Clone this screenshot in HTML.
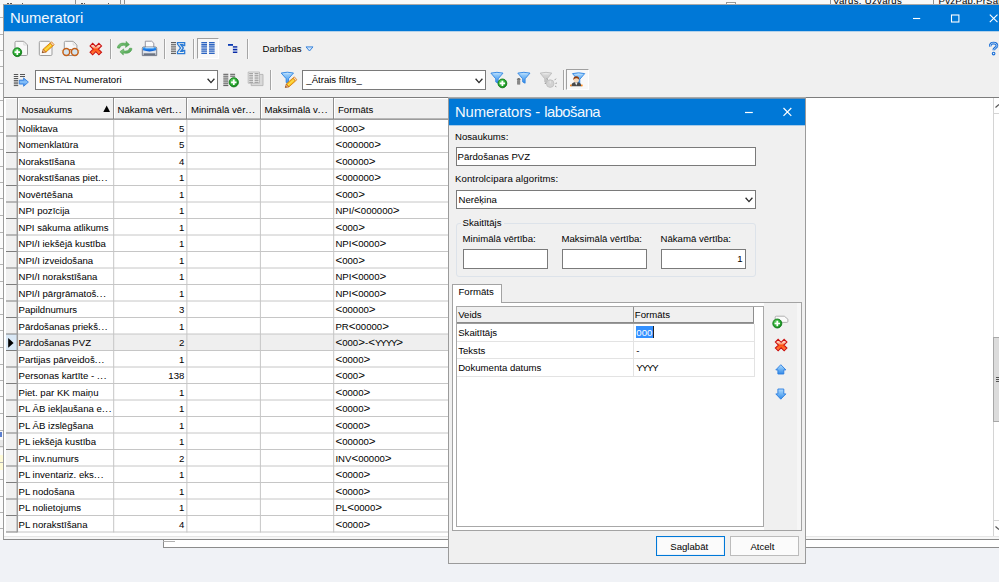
<!DOCTYPE html>
<html><head><meta charset="utf-8"><title>Numeratori</title>
<style>
html,body{margin:0;padding:0}
body{width:999px;height:582px;overflow:hidden;position:relative;background:#f0f2f6;
 font-family:"Liberation Sans",sans-serif;font-size:9.6px;color:#000;line-height:12px}
div,span,svg{position:absolute;box-sizing:border-box}
.t{white-space:nowrap;line-height:12px;height:12px}
.r{text-align:right}
.w{color:#fff}
.b{position:static;font-size:11.6px;line-height:0}
.ti{font-size:14.8px;line-height:18px;height:18px;color:#f4f9fd;white-space:nowrap}
.vl{width:1px;background:#c9c9c9}
.hl{height:1px;background:#c9c9c9}
.sep{width:1px;background:#a5a5a5;box-shadow:1px 0 0 #fbfbfb}
.inp{background:#fff;border:1px solid #7a7a7a}
</style></head>
<body>
<div style="left:0px;top:0px;width:999px;height:5px;background:#f5f5f5"></div>
<div style="left:125px;top:0px;width:874px;height:5px;background:#f9f9f9"></div>
<div style="left:75px;top:0px;width:1px;height:5px;background:#8f8f8f"></div>
<div style="left:120px;top:0px;width:1px;height:5px;background:#8f8f8f"></div>
<div style="left:124px;top:0px;width:1px;height:5px;background:#8f8f8f"></div>
<div style="left:830px;top:0px;width:1px;height:5px;background:#8f8f8f"></div>
<div style="left:933px;top:0px;width:1px;height:5px;background:#8f8f8f"></div>
<div style="left:726px;top:2px;width:10px;height:3px;background:#fff;border:1px solid #9a9a9a;border-bottom:none"></div>
<div style="left:0;top:0;width:999px;height:4.6px;overflow:hidden">
<div class="t " style="left:833px;top:-5px;letter-spacing:.3px">Vards, Uzvards</div>
<div class="t " style="left:938.5px;top:-5px;letter-spacing:.25px">PvzPap.PrSan</div>
</div>
<div style="left:7px;top:3px;width:2px;height:1.5px;background:#555"></div>
<div style="left:10px;top:3px;width:2px;height:1.5px;background:#555"></div>
<div style="left:22px;top:3px;width:1px;height:1.5px;background:#555"></div>
<div style="left:81px;top:3px;width:2px;height:1.5px;background:#555"></div>
<div style="left:84px;top:3px;width:1px;height:1.5px;background:#555"></div>
<div style="left:108px;top:3px;width:1px;height:1.5px;background:#555"></div>
<div style="left:0px;top:5px;width:3px;height:535px;background:#fbfbfb"></div>
<div style="left:0px;top:440px;width:3px;height:8px;background:#e8e8e8"></div>
<div style="left:0px;top:455px;width:3px;height:15px;background:#fffbd6"></div>
<div style="left:0px;top:432px;width:2px;height:5px;background:#5b7fd0"></div>
<div style="left:0px;top:17px;width:3px;height:1px;background:#b4b4b4"></div>
<div style="left:0px;top:34px;width:3px;height:1px;background:#b4b4b4"></div>
<div style="left:0px;top:50px;width:3px;height:1px;background:#b4b4b4"></div>
<div style="left:0px;top:66px;width:3px;height:1px;background:#b4b4b4"></div>
<div style="left:0px;top:83px;width:3px;height:1px;background:#b4b4b4"></div>
<div style="left:0px;top:100px;width:3px;height:1px;background:#b4b4b4"></div>
<div style="left:0px;top:116px;width:3px;height:1px;background:#b4b4b4"></div>
<div style="left:0px;top:132px;width:3px;height:1px;background:#b4b4b4"></div>
<div style="left:0px;top:149px;width:3px;height:1px;background:#b4b4b4"></div>
<div style="left:0px;top:166px;width:3px;height:1px;background:#b4b4b4"></div>
<div style="left:0px;top:182px;width:3px;height:1px;background:#b4b4b4"></div>
<div style="left:0px;top:198px;width:3px;height:1px;background:#b4b4b4"></div>
<div style="left:0px;top:215px;width:3px;height:1px;background:#b4b4b4"></div>
<div style="left:0px;top:232px;width:3px;height:1px;background:#b4b4b4"></div>
<div style="left:0px;top:248px;width:3px;height:1px;background:#b4b4b4"></div>
<div style="left:0px;top:264px;width:3px;height:1px;background:#b4b4b4"></div>
<div style="left:0px;top:281px;width:3px;height:1px;background:#b4b4b4"></div>
<div style="left:0px;top:298px;width:3px;height:1px;background:#b4b4b4"></div>
<div style="left:0px;top:314px;width:3px;height:1px;background:#b4b4b4"></div>
<div style="left:0px;top:330px;width:3px;height:1px;background:#b4b4b4"></div>
<div style="left:0px;top:347px;width:3px;height:1px;background:#b4b4b4"></div>
<div style="left:0px;top:364px;width:3px;height:1px;background:#b4b4b4"></div>
<div style="left:0px;top:380px;width:3px;height:1px;background:#b4b4b4"></div>
<div style="left:0px;top:396px;width:3px;height:1px;background:#b4b4b4"></div>
<div style="left:0px;top:413px;width:3px;height:1px;background:#b4b4b4"></div>
<div style="left:0px;top:430px;width:3px;height:1px;background:#b4b4b4"></div>
<div style="left:0px;top:446px;width:3px;height:1px;background:#b4b4b4"></div>
<div style="left:0px;top:462px;width:3px;height:1px;background:#b4b4b4"></div>
<div style="left:0px;top:479px;width:3px;height:1px;background:#b4b4b4"></div>
<div style="left:0px;top:496px;width:3px;height:1px;background:#b4b4b4"></div>
<div style="left:0px;top:512px;width:3px;height:1px;background:#b4b4b4"></div>
<div style="left:0px;top:528px;width:3px;height:1px;background:#b4b4b4"></div>
<div style="left:163px;top:540px;width:836px;height:8px;background:#fff;border-left:1px solid #8c8c8c;border-bottom:1px solid #8c8c8c"></div>
<div style="left:163px;top:541px;width:12px;height:1px;background:#b0b0b0"></div>
<div style="left:3px;top:4px;width:996px;height:536px;background:#f0f0f0;border-left:1px solid #9c9c9c;border-bottom:1px solid #8a8a8a;border-top:1px solid #a8a8a8"></div>
<div style="left:4px;top:5px;width:995px;height:26px;background:#0078d7"></div>
<div style="left:4px;top:31px;width:995px;height:1px;background:#b4d2ea"></div>
<div class="ti" style="left:10px;top:8.5px">Numeratori</div>
<svg style="left:905px;top:8px" width="94" height="20" viewBox="0 0 94 20"><g stroke="#fff" stroke-width="1.1" fill="none"><path d="M8 10.5H15.2"/><rect x="46.5" y="7" width="7.4" height="7"/><path d="M84.8 6.7L92.5 14.2M92.5 6.7L84.8 14.2"/></g></svg>
<div style="left:4px;top:97px;width:995px;height:439px;background:#fff;border-top:1px solid #7d7d7d"></div>
<div style="left:4px;top:536px;width:995px;height:1px;background:#e6e6e6"></div>
<div style="left:4px;top:537px;width:995px;height:2px;background:#f7f7f7"></div>
<div style="left:6px;top:98px;width:651px;height:21.5px;background:#f0f0f0;border-top:1px solid #fff"></div>
<div style="left:16.5px;top:98px;width:1.5px;height:21.5px;background:#8e8e8e"></div>
<div style="left:18px;top:99px;width:1px;height:20px;background:#fff"></div>
<div style="left:112.5px;top:98px;width:1.5px;height:21.5px;background:#8e8e8e"></div>
<div style="left:114px;top:99px;width:1px;height:20px;background:#fff"></div>
<div style="left:185.5px;top:98px;width:1.5px;height:21.5px;background:#8e8e8e"></div>
<div style="left:187px;top:99px;width:1px;height:20px;background:#fff"></div>
<div style="left:259.5px;top:98px;width:1.5px;height:21.5px;background:#8e8e8e"></div>
<div style="left:261px;top:99px;width:1px;height:20px;background:#fff"></div>
<div style="left:332.5px;top:98px;width:1.5px;height:21.5px;background:#8e8e8e"></div>
<div style="left:334px;top:99px;width:1px;height:20px;background:#fff"></div>
<div class="t " style="left:21.4px;top:104px;">Nosaukums</div>
<div class="t " style="left:117.5px;top:104px;">Nākamā vērt<span style="position:static;letter-spacing:.75px">...</span></div>
<div class="t " style="left:191px;top:104px;">Minimālā vēr<span style="position:static;letter-spacing:.75px">...</span></div>
<div class="t " style="left:264.5px;top:104px;">Maksimālā v<span style="position:static;letter-spacing:.75px">...</span></div>
<div class="t " style="left:338px;top:104px;">Formāts</div>
<svg style="left:103px;top:105px" width="8" height="8" viewBox="0 0 8 8"><path d="M0.3 7L3.7 0.6L7 7Z" fill="#000"/></svg>
<div style="left:6px;top:119px;width:11px;height:413px;background:#f0f0f0"></div>
<svg style="left:0;top:0" width="700" height="540" viewBox="0 0 700 540">
<rect x="17.5" y="334" width="640" height="16.5" fill="#efefef"/>
<rect x="6" y="334" width="11" height="16.5" fill="#d9e8f6"/>
<path d="M8.2 338.1L13.6 342.9L8.2 347.7Z" fill="#000"/>
<path d="M17.5 136H657M17.5 152.5H657M17.5 169H657M17.5 185.5H657M17.5 202H657M17.5 218.5H657M17.5 235H657M17.5 251.5H657M17.5 268H657M17.5 284.5H657M17.5 301H657M17.5 317.5H657M17.5 334H657M17.5 350.5H657M17.5 367H657M17.5 383.5H657M17.5 400H657M17.5 416.5H657M17.5 433H657M17.5 449.5H657M17.5 466H657M17.5 482.5H657M17.5 499H657M17.5 515.5H657M17.5 532H657" stroke="#c6c6c6" stroke-width="1" fill="none"/>
<path d="M6 119.15H657" stroke="#808080" stroke-width="1.2" fill="none"/>
<path d="M6 136H17M6 152.5H17M6 169H17M6 185.5H17M6 202H17M6 218.5H17M6 235H17M6 251.5H17M6 268H17M6 284.5H17M6 301H17M6 317.5H17M6 334H17M6 350.5H17M6 367H17M6 383.5H17M6 400H17M6 416.5H17M6 433H17M6 449.5H17M6 466H17M6 482.5H17M6 499H17M6 515.5H17M6 532H17" stroke="#7e7e7e" stroke-width="1" fill="none"/>
<path d="M113.7 119.5V532.5M186.9 119.5V532.5M260.4 119.5V532.5M333.7 119.5V532.5" stroke="#c6c6c6" stroke-width="1" fill="none"/>
<path d="M17.3 119V532.5" stroke="#9a9a9a" stroke-width="1.5" fill="none"/>
</svg>
<div class="t " style="left:18.5px;top:123px;">Noliktava</div>
<div class="t r " style="left:-15.7px;width:200px;top:123px;">5</div>
<div class="t " style="left:335.4px;top:123px;"><span class="b">&lt;</span>000<span class="b">&gt;</span></div>
<div class="t " style="left:18.5px;top:139px;">Nomenklatūra</div>
<div class="t r " style="left:-15.7px;width:200px;top:139px;">5</div>
<div class="t " style="left:335.4px;top:139px;"><span class="b">&lt;</span>000000<span class="b">&gt;</span></div>
<div class="t " style="left:18.5px;top:156px;">Norakstīšana</div>
<div class="t r " style="left:-15.7px;width:200px;top:156px;">4</div>
<div class="t " style="left:335.4px;top:156px;"><span class="b">&lt;</span>00000<span class="b">&gt;</span></div>
<div class="t " style="left:18.5px;top:172px;">Norakstīšanas piet<span style="position:static;letter-spacing:.75px">...</span></div>
<div class="t r " style="left:-15.7px;width:200px;top:172px;">1</div>
<div class="t " style="left:335.4px;top:172px;"><span class="b">&lt;</span>000000<span class="b">&gt;</span></div>
<div class="t " style="left:18.5px;top:189px;">Novērtēšana</div>
<div class="t r " style="left:-15.7px;width:200px;top:189px;">1</div>
<div class="t " style="left:335.4px;top:189px;"><span class="b">&lt;</span>000<span class="b">&gt;</span></div>
<div class="t " style="left:18.5px;top:205px;">NPI pozīcija</div>
<div class="t r " style="left:-15.7px;width:200px;top:205px;">1</div>
<div class="t " style="left:335.4px;top:205px;">NPI/<span class="b">&lt;</span>000000<span class="b">&gt;</span></div>
<div class="t " style="left:18.5px;top:222px;">NPI sākuma atlikums</div>
<div class="t r " style="left:-15.7px;width:200px;top:222px;">1</div>
<div class="t " style="left:335.4px;top:222px;"><span class="b">&lt;</span>000<span class="b">&gt;</span></div>
<div class="t " style="left:18.5px;top:238px;">NPI/I iekšējā kustība</div>
<div class="t r " style="left:-15.7px;width:200px;top:238px;">1</div>
<div class="t " style="left:335.4px;top:238px;">NPI<span class="b">&lt;</span>0000<span class="b">&gt;</span></div>
<div class="t " style="left:18.5px;top:255px;">NPI/I izveidošana</div>
<div class="t r " style="left:-15.7px;width:200px;top:255px;">1</div>
<div class="t " style="left:335.4px;top:255px;"><span class="b">&lt;</span>000<span class="b">&gt;</span></div>
<div class="t " style="left:18.5px;top:271px;">NPI/I norakstīšana</div>
<div class="t r " style="left:-15.7px;width:200px;top:271px;">1</div>
<div class="t " style="left:335.4px;top:271px;">NPI<span class="b">&lt;</span>0000<span class="b">&gt;</span></div>
<div class="t " style="left:18.5px;top:288px;">NPI/I pārgrāmatoš<span style="position:static;letter-spacing:.75px">...</span></div>
<div class="t r " style="left:-15.7px;width:200px;top:288px;">1</div>
<div class="t " style="left:335.4px;top:288px;">NPI<span class="b">&lt;</span>0000<span class="b">&gt;</span></div>
<div class="t " style="left:18.5px;top:304px;">Papildnumurs</div>
<div class="t r " style="left:-15.7px;width:200px;top:304px;">3</div>
<div class="t " style="left:335.4px;top:304px;"><span class="b">&lt;</span>00000<span class="b">&gt;</span></div>
<div class="t " style="left:18.5px;top:321px;">Pārdošanas priekš<span style="position:static;letter-spacing:.75px">...</span></div>
<div class="t r " style="left:-15.7px;width:200px;top:321px;">1</div>
<div class="t " style="left:335.4px;top:321px;">PR<span class="b">&lt;</span>00000<span class="b">&gt;</span></div>
<div class="t " style="left:18.5px;top:337px;">Pārdošanas PVZ</div>
<div class="t r " style="left:-15.7px;width:200px;top:337px;">2</div>
<div class="t " style="left:335.4px;top:337px;"><span class="b">&lt;</span>000<span class="b">&gt;</span>-<span class="b">&lt;</span><span style="position:static;letter-spacing:-1.05px">YYYY</span><span class="b">&gt;</span></div>
<div class="t " style="left:18.5px;top:354px;">Partijas pārveidoš<span style="position:static;letter-spacing:.75px">...</span></div>
<div class="t r " style="left:-15.7px;width:200px;top:354px;">1</div>
<div class="t " style="left:335.4px;top:354px;"><span class="b">&lt;</span>0000<span class="b">&gt;</span></div>
<div class="t " style="left:18.5px;top:370px;">Personas kartīte - <span style="position:static;letter-spacing:.75px">...</span></div>
<div class="t r " style="left:-15.7px;width:200px;top:370px;">138</div>
<div class="t " style="left:335.4px;top:370px;"><span class="b">&lt;</span>000<span class="b">&gt;</span></div>
<div class="t " style="left:18.5px;top:387px;">Piet. par KK maiņu</div>
<div class="t r " style="left:-15.7px;width:200px;top:387px;">1</div>
<div class="t " style="left:335.4px;top:387px;"><span class="b">&lt;</span>0000<span class="b">&gt;</span></div>
<div class="t " style="left:18.5px;top:403px;">PL ĀB iekļaušana e<span style="position:static;letter-spacing:.75px">...</span></div>
<div class="t r " style="left:-15.7px;width:200px;top:403px;">1</div>
<div class="t " style="left:335.4px;top:403px;"><span class="b">&lt;</span>0000<span class="b">&gt;</span></div>
<div class="t " style="left:18.5px;top:420px;">PL ĀB izslēgšana</div>
<div class="t r " style="left:-15.7px;width:200px;top:420px;">1</div>
<div class="t " style="left:335.4px;top:420px;"><span class="b">&lt;</span>0000<span class="b">&gt;</span></div>
<div class="t " style="left:18.5px;top:436px;">PL iekšējā kustība</div>
<div class="t r " style="left:-15.7px;width:200px;top:436px;">1</div>
<div class="t " style="left:335.4px;top:436px;"><span class="b">&lt;</span>00000<span class="b">&gt;</span></div>
<div class="t " style="left:18.5px;top:453px;">PL inv.numurs</div>
<div class="t r " style="left:-15.7px;width:200px;top:453px;">2</div>
<div class="t " style="left:335.4px;top:453px;">INV<span class="b">&lt;</span>00000<span class="b">&gt;</span></div>
<div class="t " style="left:18.5px;top:469px;">PL inventariz. eks<span style="position:static;letter-spacing:.75px">...</span></div>
<div class="t r " style="left:-15.7px;width:200px;top:469px;">1</div>
<div class="t " style="left:335.4px;top:469px;"><span class="b">&lt;</span>0000<span class="b">&gt;</span></div>
<div class="t " style="left:18.5px;top:486px;">PL nodošana</div>
<div class="t r " style="left:-15.7px;width:200px;top:486px;">1</div>
<div class="t " style="left:335.4px;top:486px;"><span class="b">&lt;</span>0000<span class="b">&gt;</span></div>
<div class="t " style="left:18.5px;top:502px;">PL nolietojums</div>
<div class="t r " style="left:-15.7px;width:200px;top:502px;">1</div>
<div class="t " style="left:335.4px;top:502px;">PL<span class="b">&lt;</span>0000<span class="b">&gt;</span></div>
<div class="t " style="left:18.5px;top:519px;">PL norakstīšana</div>
<div class="t r " style="left:-15.7px;width:200px;top:519px;">4</div>
<div class="t " style="left:335.4px;top:519px;"><span class="b">&lt;</span>0000<span class="b">&gt;</span></div>
<div style="left:993px;top:98px;width:6px;height:438px;background:#fff;border-left:1px solid #d4d4d4"></div>
<div style="left:993px;top:113px;width:6px;height:1px;background:#d4d4d4"></div>
<div style="left:993px;top:520px;width:6px;height:1px;background:#d4d4d4"></div>
<div style="left:993px;top:337px;width:6px;height:85px;background:#dcdcdc;border-left:1px solid #a8a8a8;border-top:1px solid #a8a8a8;border-bottom:1px solid #a8a8a8"></div>
<div style="left:996px;top:377px;width:3px;height:1px;background:#555"></div>
<div style="left:996px;top:379px;width:3px;height:1px;background:#555"></div>
<div style="left:996px;top:381px;width:3px;height:1px;background:#555"></div>
<svg style="left:995px;top:103px" width="4" height="6" viewBox="0 0 4 6"><path d="M0.5 4.5L4 1.5" stroke="#555" stroke-width="1.2" fill="none"/></svg>
<svg style="left:995px;top:525px" width="4" height="6" viewBox="0 0 4 6"><path d="M0.5 1.5L4 4.5" stroke="#555" stroke-width="1.2" fill="none"/></svg>
<!--TOOLBAR-->
<div class="sep" style="left:110px;top:38.5px;width:1px;height:20px;"></div>
<div class="sep" style="left:164px;top:38.5px;width:1px;height:20px;"></div>
<div class="sep" style="left:193px;top:38.5px;width:1px;height:20px;"></div>
<div class="sep" style="left:247px;top:38.5px;width:1px;height:20px;"></div>
<div style="left:197px;top:38px;width:22px;height:20.5px;background:#f8f8f8;border-top:1px solid #a0a0a0;border-left:1px solid #a0a0a0;border-right:1px solid #fff;border-bottom:1px solid #fff"></div>
<div class="t " style="left:262.6px;top:43px;">Darbības</div>
<svg style="left:304.5px;top:45.5px" width="9" height="6" viewBox="0 0 9 6"><path d="M1 0.9H8L4.5 5Z" fill="#cfe4fb" stroke="#3a86dc" stroke-width="1"/></svg>
<div class="inp" style="left:35px;top:70px;width:183px;height:19.5px;"></div>
<div class="t " style="left:38.9px;top:74px;">INSTAL Numeratori</div>
<svg style="left:206.5px;top:78px" width="8" height="6" viewBox="0 0 8 6"><path d="M0.6 0.8L4 4.6L7.4 0.8" stroke="#2b2b2b" stroke-width="1.3" fill="none"/></svg>
<div class="inp" style="left:302px;top:70px;width:184px;height:19.5px;"></div>
<div class="t " style="left:306.3px;top:74px;">_Ātrais filtrs_</div>
<svg style="left:474.5px;top:78px" width="8" height="6" viewBox="0 0 8 6"><path d="M0.6 0.8L4 4.6L7.4 0.8" stroke="#2b2b2b" stroke-width="1.3" fill="none"/></svg>
<div class="sep" style="left:270px;top:70px;width:1px;height:19.5px;"></div>
<div class="sep" style="left:563px;top:70px;width:1px;height:19.5px;"></div>
<div style="left:566px;top:69px;width:22.5px;height:20.5px;background:#f8f8f8;border-top:1px solid #a0a0a0;border-left:1px solid #a0a0a0;border-right:1px solid #fff;border-bottom:1px solid #fff"></div>
<!--ICONS-->
<!--DIALOG-->
<div style="left:448px;top:97px;width:358px;height:466.5px;background:#f0f0f0;border:1px solid #9b9b9b;border-top-color:#a9a9a9"></div>
<div style="left:449px;top:98px;width:356px;height:1px;background:#6f8faa"></div>
<div style="left:449px;top:99px;width:356px;height:26px;background:#0078d7"></div>
<div style="left:449px;top:125px;width:356px;height:1px;background:#a8cbe8"></div>
<div class="ti" style="left:455px;top:103px;letter-spacing:-0.1px">Numerators - <span style="position:static;letter-spacing:-0.52px">labošana</span></div>
<svg style="left:740px;top:104px" width="60" height="16" viewBox="0 0 60 16"><g stroke="#fff" stroke-width="1.2" fill="none"><path d="M5 8.5H12.8"/><path d="M43.5 4L51.3 11.8M51.3 4L43.5 11.8"/></g></svg>
<div class="t " style="left:455px;top:131px;">Nosaukums:</div>
<div class="inp" style="left:455.5px;top:147px;width:300.5px;height:19.4px;"></div>
<div class="t " style="left:457.6px;top:151px;">Pārdošanas PVZ</div>
<div class="t " style="left:455px;top:173px;letter-spacing:.1px">Kontrolcipara algoritms:</div>
<div class="inp" style="left:455.5px;top:190px;width:300.5px;height:18.8px;"></div>
<div class="t " style="left:458.5px;top:194px;">Nerēķina</div>
<svg style="left:744.5px;top:197px" width="8" height="6" viewBox="0 0 8 6"><path d="M0.6 0.8L4 4.6L7.4 0.8" stroke="#2b2b2b" stroke-width="1.3" fill="none"/></svg>
<div style="left:456px;top:222.5px;width:300px;height:54.5px;border:1px solid #dde3ea;border-radius:3px"></div>
<div style="left:461px;top:218px;width:43px;height:10px;background:#f0f0f0"></div>
<div class="t " style="left:462.6px;top:217px;">Skaitītājs</div>
<div class="t " style="left:462.6px;top:233px;">Minimālā vērtība:</div>
<div class="t " style="left:561.5px;top:233px;">Maksimālā vērtība:</div>
<div class="t " style="left:660.5px;top:233px;">Nākamā vērtība:</div>
<div class="inp" style="left:463px;top:249px;width:85.2px;height:20px;"></div>
<div class="inp" style="left:562px;top:249px;width:85.2px;height:20px;"></div>
<div class="inp" style="left:661px;top:249px;width:85.2px;height:20px;"></div>
<div class="t r " style="left:542.5px;width:200px;top:253px;">1</div>
<div style="left:452px;top:302px;width:350px;height:228.5px;background:#fff;border:1px solid #a3a3a3"></div>
<div style="left:452px;top:283.5px;width:50.3px;height:19.5px;background:#fff;border:1px solid #a3a3a3;border-bottom:none"></div>
<div class="t " style="left:458.5px;top:286px;">Formāts</div>
<div style="left:764px;top:303px;width:37px;height:227px;background:#f0f0f0"></div>
<div style="left:797px;top:303px;width:4px;height:227px;background:#f6f6f6"></div>
<div style="left:456px;top:305.5px;width:308px;height:221.5px;background:#fff;border:1px solid #a8a8a8"></div>
<div style="left:457px;top:306.5px;width:297px;height:16.5px;background:#f0f0f0;border-bottom:1px solid #8a8a8a;border-right:1.5px solid #8e8e8e"></div>
<div style="left:457px;top:323px;width:297px;height:1px;background:#9a9a9a"></div>
<div style="left:632.5px;top:307px;width:1.5px;height:16px;background:#8e8e8e"></div>
<div class="t " style="left:458.2px;top:309px;">Veids</div>
<div class="t " style="left:634.8px;top:309px;">Formāts</div>
<div style="left:457px;top:341px;width:297px;height:1px;background:#e3e3e3"></div>
<div class="t " style="left:458.2px;top:327px;">Skaitītājs</div>
<div style="left:636px;top:326px;width:16.8px;height:11.8px;background:#3390ff"></div>
<div style="left:652.5px;top:326px;width:1px;height:11.8px;background:#222"></div>
<div class="t w" style="left:636.3px;top:327px;">000</div>
<div style="left:457px;top:358px;width:297px;height:1px;background:#e3e3e3"></div>
<div class="t " style="left:458.2px;top:345px;">Teksts</div>
<div class="t " style="left:636.3px;top:345px;">-</div>
<div style="left:457px;top:376px;width:297px;height:1px;background:#e3e3e3"></div>
<div class="t " style="left:458.2px;top:362px;">Dokumenta datums</div>
<div class="t " style="left:636.3px;top:362px;"><span style="position:static;letter-spacing:-1.05px">YYYY</span></div>
<div style="left:633px;top:324px;width:1px;height:52px;background:#e3e3e3"></div>
<div style="left:753.5px;top:324px;width:1px;height:53px;background:#e3e3e3"></div>
<div style="left:656px;top:536px;width:69px;height:20px;background:#fbfbfb;border:1px solid #0078d7;box-shadow:inset 0 0 0 1px #e9f2fb"></div>
<div style="left:729.5px;top:536.3px;width:69px;height:19.5px;background:#fbfbfb;border:1px solid #bcbcbc"></div>
<div class="t " style="left:670.3px;top:541px;">Saglabāt</div>
<div class="t " style="left:750.4px;top:541px;">Atcelt</div>
<svg style="left:0;top:0" width="999" height="582" viewBox="0 0 999 582"><defs>
<radialGradient id="gg" cx="0.42" cy="0.4" r="0.62"><stop offset="0" stop-color="#7fe07f"/><stop offset="0.55" stop-color="#35b43c"/><stop offset="1" stop-color="#0d7d14"/></radialGradient>
<linearGradient id="rx" x1="0" y1="0" x2="0" y2="1"><stop offset="0" stop-color="#ffe9e0"/><stop offset="0.3" stop-color="#ffc3a8"/><stop offset="0.52" stop-color="#ff5410"/><stop offset="1" stop-color="#ff8a50"/></linearGradient>
<linearGradient id="fg" x1="0" y1="0" x2="0" y2="1"><stop offset="0" stop-color="#b4dbfc"/><stop offset="0.4" stop-color="#7bbcf7"/><stop offset="1" stop-color="#3389e6"/></linearGradient>
<linearGradient id="fgg" x1="0" y1="0" x2="0" y2="1"><stop offset="0" stop-color="#dedede"/><stop offset="1" stop-color="#bdbdbd"/></linearGradient>
<linearGradient id="ba" x1="0" y1="0" x2="0" y2="1"><stop offset="0" stop-color="#3b8ae6"/><stop offset="0.5" stop-color="#8cc4fa"/><stop offset="1" stop-color="#2b7ade"/></linearGradient>
<linearGradient id="pb" x1="0" y1="0" x2="0" y2="1"><stop offset="0" stop-color="#2ea0ff"/><stop offset="1" stop-color="#0a58d0"/></linearGradient>
<linearGradient id="gr" x1="0" y1="0" x2="1" y2="1"><stop offset="0" stop-color="#8fd08a"/><stop offset="1" stop-color="#3f9a45"/></linearGradient>
</defs><path d="M16.2 41.3H23.8L27.5 45V54.3Q27.5 55.5 26.3 55.5H16.2Q15 55.5 15 54.3V42.5Q15 41.3 16.2 41.3Z" fill="#f8f8f8" stroke="#9d9d9d" stroke-width="1"/>
<path d="M23.8 41.7V45H27.1" fill="none" stroke="#d4d4d4" stroke-width="0.8"/>
<circle cx="17.3" cy="52.2" r="4.4" fill="url(#gg)" stroke="#117c18" stroke-width="0.9"/>
<path d="M14.6 52.2H20M17.3 49.5V54.9" stroke="#fff" stroke-width="1.7" fill="none"/>
<path d="M40.5 41.3H49.5L52 43.8V54.3Q52 55.5 50.8 55.5H40.5Q39.3 55.5 39.3 54.3V42.5Q39.3 41.3 40.5 41.3Z" fill="#f8f8f8" stroke="#9d9d9d" stroke-width="1"/>
<path d="M49.5 41.7V43.8H51.6" fill="none" stroke="#d4d4d4" stroke-width="0.8"/>
<path d="M45.77 52.22L52.87 45.99L50.23 42.99L43.13 49.22Z" fill="#f7c51e" stroke="#d87a12" stroke-width="0.9"/>
<path d="M44.45 50.72L51.55 44.49" stroke="#ffe36a" stroke-width="1" fill="none"/>
<path d="M52.87 45.99L54.22 44.8L51.58 41.8L50.23 42.99Z" fill="#f8d6bd" stroke="#d9821a" stroke-width="0.8"/>
<path d="M45.77 52.22L42.2 52.7L43.13 49.22Z" fill="#f1b98a" stroke="#b5601a" stroke-width="0.7"/>
<path d="M43.61 52.33L42.2 52.7L42.75 51.35Z" fill="#3a1a00"/>
<path d="M65.5 41.3H73.2L76.9 45V54.3Q76.9 55.5 75.7 55.5H65.5Q64.3 55.5 64.3 54.3V42.5Q64.3 41.3 65.5 41.3Z" fill="#f8f8f8" stroke="#9d9d9d" stroke-width="1"/>
<path d="M73.2 41.7V45H76.5" fill="none" stroke="#d4d4d4" stroke-width="0.8"/>
<circle cx="66.3" cy="52" r="3.4" fill="#d3e3ee" stroke="#c4601a" stroke-width="1.5"/>
<circle cx="74.8" cy="52" r="3.4" fill="#d3e3ee" stroke="#c4601a" stroke-width="1.5"/>
<path d="M69.3 50.2Q70.55 49 71.8 50.2" stroke="#c4601a" stroke-width="1.1" fill="none"/>
<path d="M62.6 51.6L61.9 50.8M78.5 51.6L79.2 50.8" stroke="#e0a030" stroke-width="1" fill="none"/>
<path d="M98.92 43.37L101.53 45.98L98.42 49.1L101.53 52.22L98.92 54.83L95.8 51.72L92.68 54.83L90.07 52.22L93.18 49.1L90.07 45.98L92.68 43.37L95.8 46.48Z" fill="url(#rx)" stroke="#cb1212" stroke-width="1.1" stroke-linejoin="miter"/>
<path d="M117.4 47.9C117.6 43.6 122.5 42.2 126 43.6L126 41.4L129.4 44.6L125.6 47.4L125.8 45.6C123 44.6 120.2 45.6 119.6 48.2Z" fill="url(#gr)" stroke="#4a9d4e" stroke-width="0.6" stroke-linejoin="round"/>
<path d="M131.9 48.4C131.7 52.7 126.8 54.1 123.3 52.7L123.3 54.9L119.9 51.7L123.7 48.9L123.5 50.7C126.3 51.7 129.1 50.7 129.7 48.1Z" fill="url(#gr)" stroke="#4a9d4e" stroke-width="0.6" stroke-linejoin="round"/>
<path d="M145.3 47.6V41.2H151.6L153.8 43.2V47.6Z" fill="#fbfbfb" stroke="#8b8b98" stroke-width="0.9"/>
<path d="M142.3 48.3Q142.3 47 143.6 47H155.4Q156.7 47 156.7 48.3V55.6H142.3Z" fill="#dfe3ea" stroke="#6a7180" stroke-width="0.9"/>
<path d="M143 47.6H156V50.3Q149.5 52.6 143 50.3Z" fill="url(#pb)"/>
<rect x="143.6" y="53.3" width="11.8" height="1.9" fill="#6b7382"/>
<rect x="145.4" y="47.4" width="8.3" height="0.9" fill="#f4f4f4"/>
<path d="M171 42.5H176M171 44.34H176M171 46.18H176M171 48.02H176M171 49.86H176M171 51.7H176M171 53.54H176" stroke="#4d4d4d" stroke-width="0.9" fill="none"/>
<path d="M177.5 42.5H184.7V45.7H183V44.7H180.7L183.4 48L180.7 51.3H183V50.3H184.7V53.5H177.5V51.9L180.6 48L177.5 44.1Z" fill="#edf1ee" stroke="#2a7ad6" stroke-width="1.25" stroke-linejoin="miter"/>
<path d="M201.4 42.5H207M201.4 44.34H207M201.4 46.18H207M201.4 48.02H207M201.4 49.86H207M201.4 51.7H207M201.4 53.54H207" stroke="#164fb6" stroke-width="1.15" fill="none"/>
<path d="M209 42.5H214.6M209 44.34H214.6M209 46.18H214.6M209 48.02H214.6M209 49.86H214.6M209 51.7H214.6M209 53.54H214.6" stroke="#164fb6" stroke-width="1.15" fill="none"/>
<rect x="201.4" y="42" width="5.6" height="12" fill="#6f9fe0" opacity="0.25"/><rect x="209" y="42" width="5.6" height="12" fill="#6f9fe0" opacity="0.25"/>
<rect x="228" y="44" width="5" height="1.8" fill="#0b3cb4"/>
<rect x="232.9" y="46.2" width="4.4" height="1.5" fill="#0a2aa6"/>
<rect x="232.9" y="48.9" width="4.4" height="1.5" fill="#0a2aa6"/>
<rect x="232.9" y="51.5" width="4.4" height="1.5" fill="#0a2aa6"/>
<rect x="232.9" y="47.7" width="4.4" height="1.2" fill="#8fb0e6" opacity="0.6"/><rect x="232.9" y="50.4" width="4.4" height="1.1" fill="#8fb0e6" opacity="0.6"/>
<path d="M990.3 46.5C989.9 43.6 992 43.1 993.6 43.1C995.6 43.1 996.9 44.2 996.9 45.7C996.9 47.2 995.6 47.7 994.7 48.4C994 48.9 993.8 49.3 993.8 50.3" fill="none" stroke="#1b6fd6" stroke-width="2.7" stroke-linecap="butt" stroke-linejoin="round"/>
<path d="M990.3 46.5C989.9 43.6 992 43.1 993.6 43.1C995.6 43.1 996.9 44.2 996.9 45.7C996.9 47.2 995.6 47.7 994.7 48.4C994 48.9 993.8 49.3 993.8 50.3" fill="none" stroke="#d6e9fb" stroke-width="0.8" stroke-linecap="butt"/>
<circle cx="993.6" cy="53.6" r="1.3" fill="#e4f1fd" stroke="#1b6fd6" stroke-width="1.1"/>
<path d="M13.8 74.5H18.2M13.8 76.5H18.2M13.8 78.5H18.2M13.8 80.4H18.2M13.8 82.1H18.2M13.8 83.8H18.2M13.8 85.6H18.2" stroke="#4d4d4d" stroke-width="0.95" fill="none"/>
<path d="M20 74.5H25M20 76.5H25" stroke="#4d4d4d" stroke-width="0.95" fill="none"/>
<path d="M19.3 80.1H23.6V77.9L28.4 82.1L23.6 86.3V84.1H19.3Z" fill="url(#ba)" stroke="#2b7ade" stroke-width="0.8" stroke-linejoin="round"/>
<path d="M223.3 74.3H228.3M223.3 76.2H228.3M223.3 78.1H228.3M223.3 80H228.3M223.3 81.9H228.3M223.3 83.8H228.3M223.3 85.6H228.3" stroke="#4d4d4d" stroke-width="0.95" fill="none"/>
<path d="M230.2 74.3H235.1M230.2 76.2H235.1" stroke="#4d4d4d" stroke-width="0.95" fill="none"/>
<circle cx="233.8" cy="82.3" r="4.6" fill="url(#gg)" stroke="#117c18" stroke-width="0.9"/>
<path d="M231.1 82.3H236.5M233.8 79.6V85" stroke="#fff" stroke-width="1.7" fill="none"/>
<path d="M251.2 74.4H263V85.6H251.2Z" fill="#d9d9d9" stroke="#adadad" stroke-width="0.8"/>
<path d="M248.2 72H259.5V83.2H248.2Z" fill="#ececec" stroke="#b4b4b4" stroke-width="0.8"/>
<path d="M249.2 73.6H253M249.2 75.35H253M249.2 77.1H253M249.2 78.85H253M249.2 80.6H253M249.2 82.35H253" stroke="#8f8f8f" stroke-width="0.85" fill="none"/>
<path d="M254.6 73.6H258.5M254.6 75.35H258.5M254.6 77.1H258.5M254.6 78.85H258.5M254.6 80.6H258.5M254.6 82.35H258.5" stroke="#8f8f8f" stroke-width="0.85" fill="none"/>
<path d="M281.2 73Q287.35 71.4 293.5 73L288.55 78.7V83.8L286.15 82.5V78.7Z" fill="url(#fg)" stroke="#2f84e2" stroke-width="0.9" stroke-linejoin="round"/>
<path d="M282.8 73.6Q287.35 72.6 291.9 73.6Q287.35 74.8 282.8 73.6Z" fill="#b9defd"/>
<path d="M288.84 86.96L295.56 80.95L292.96 78.04L286.24 84.05Z" fill="#f7c51e" stroke="#d87a12" stroke-width="0.9"/>
<path d="M287.54 85.5L294.26 79.5" stroke="#ffe36a" stroke-width="1" fill="none"/>
<path d="M295.56 80.95L296.9 79.75L294.3 76.85L292.96 78.04Z" fill="#f8d6bd" stroke="#d9821a" stroke-width="0.8"/>
<path d="M288.84 86.96L285.3 87.5L286.24 84.05Z" fill="#f1b98a" stroke="#b5601a" stroke-width="0.7"/>
<path d="M286.7 87.12L285.3 87.5L285.84 86.15Z" fill="#3a1a00"/>
<path d="M490.9 73.1Q496.95 71.5 503 73.1L498.15 78.8V83.2L495.75 81.9V78.8Z" fill="url(#fg)" stroke="#2f84e2" stroke-width="0.9" stroke-linejoin="round"/>
<path d="M492.5 73.7Q496.95 72.7 501.4 73.7Q496.95 74.9 492.5 73.7Z" fill="#b9defd"/>
<circle cx="502.4" cy="83.4" r="4.4" fill="url(#gg)" stroke="#117c18" stroke-width="0.9"/>
<path d="M499.7 83.4H505.1M502.4 80.7V86.1" stroke="#fff" stroke-width="1.7" fill="none"/>
<path d="M517.8 73.1Q523.9 71.5 530 73.1L525.1 78.8V83.2L522.7 81.9V78.8Z" fill="url(#fg)" stroke="#2f84e2" stroke-width="0.9" stroke-linejoin="round"/>
<path d="M519.4 73.7Q523.9 72.7 528.4 73.7Q523.9 74.9 519.4 73.7Z" fill="#b9defd"/>
<path d="M516.9 79.4H520.5M517.9 79.4V78.5H519.5V79.4" stroke="#555" stroke-width="0.8" fill="none"/><rect x="517.2" y="80.2" width="3" height="4.3" fill="#6a6a6a"/>
<path d="M518.2 80.6V84.2M519.3 80.6V84.2" stroke="#c8c8c8" stroke-width="0.4"/>
<path d="M540.2 73.1Q546 71.5 551.8 73.1L547.2 78.8V83.2L544.8 81.9V78.8Z" fill="url(#fgg)" stroke="#bcbcbc" stroke-width="0.9" stroke-linejoin="round"/>
<path d="M541.8 73.7Q546 72.7 550.2 73.7Q546 74.9 541.8 73.7Z" fill="#ededed"/>
<circle cx="550.2" cy="83.6" r="3.8" fill="#d2d2d2" stroke="#bdbdbd" stroke-width="0.8"/>
<path d="M550.2 80.8V83.6" stroke="#eee" stroke-width="0.8"/>
<path d="M544.7 83.3L546 83.5M554.6 80.2L556 78.6M555.4 83.4L557 83M555 86L556.4 86.8M547.6 79.6L546.8 78.4" stroke="#8a8a8a" stroke-width="0.8" fill="none"/>
<path d="M572.5 73.6Q578.6 72 584.7 73.6L579.8 79.3V83.6L577.4 82.3V79.3Z" fill="url(#fg)" stroke="#2f84e2" stroke-width="0.9" stroke-linejoin="round"/>
<path d="M574.1 74.2Q578.6 73.2 583.1 74.2Q578.6 75.4 574.1 74.2Z" fill="#b9defd"/>
<path d="M571.2 86.3Q571.4 82.6 574.4 82.2H578.2Q581.2 82.6 581.4 86.3Z" fill="#4a4a4a"/>
<path d="M575 82.4L576.3 85.4L577.6 82.4Z" fill="#f2f2f2"/>
<circle cx="576.3" cy="79.8" r="2.7" fill="#f6d8b8"/>
<path d="M573.3 79.9Q573.2 76.2 576.3 76.2Q579.4 76.2 579.3 79.9Q578 77.9 576.3 78.2Q574.6 77.9 573.3 79.9Z" fill="#8f3a0c"/>
<rect x="570" y="84.6" width="1.6" height="1.7" fill="#ff8a1a"/><rect x="581" y="84.6" width="1.6" height="1.7" fill="#ff8a1a"/>
<path d="M776.2 316.2H784.3L787.9 319.2V321.4Q787.9 322.4 786.9 322.4H776.2Q775.2 322.4 775.2 321.4V317.2Q775.2 316.2 776.2 316.2Z" fill="#fafafa" stroke="#a9a9a9" stroke-width="0.9"/>
<circle cx="777.3" cy="323.5" r="4.5" fill="url(#gg)" stroke="#117c18" stroke-width="0.9"/>
<path d="M774.6 323.5H780M777.3 320.8V326.2" stroke="#fff" stroke-width="1.7" fill="none"/>
<path d="M784.17 339.27L786.93 342.03L783.91 345.05L786.93 348.07L784.17 350.83L781.15 347.81L778.13 350.83L775.37 348.07L778.39 345.05L775.37 342.03L778.13 339.27L781.15 342.29Z" fill="url(#rx)" stroke="#cb1212" stroke-width="1.1" stroke-linejoin="miter"/>
<path d="M780.8 364.7L785.9 369.9H783.8V374H777.9V369.9H775.8Z" fill="url(#fg)" stroke="#2a7ee0" stroke-width="0.9" stroke-linejoin="round"/>
<path d="M780.8 399.2L785.9 393.9H783.8V389H777.9V393.9H775.8Z" fill="url(#fg)" stroke="#2a7ee0" stroke-width="0.9" stroke-linejoin="round"/></svg>
</body></html>
